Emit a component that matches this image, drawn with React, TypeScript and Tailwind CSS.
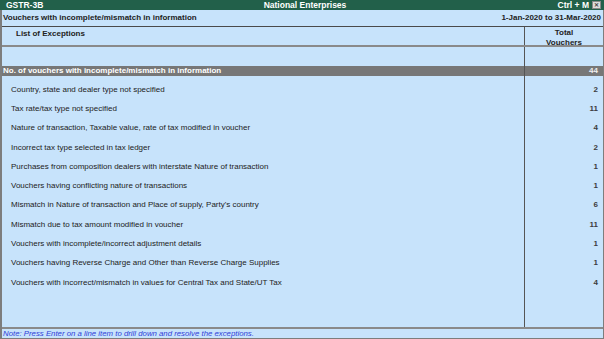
import React from "react";

const ROWS: [string, number][] = [
  ["Country, state and dealer type not specified", 2],
  ["Tax rate/tax type not specified", 11],
  ["Nature of transaction, Taxable value, rate of tax modified in voucher", 4],
  ["Incorrect tax type selected in tax ledger", 2],
  ["Purchases from composition dealers with interstate Nature of transaction", 1],
  ["Vouchers having conflicting nature of transactions", 1],
  ["Mismatch in Nature of transaction and Place of supply, Party's country", 6],
  ["Mismatch due to tax amount modified in voucher", 11],
  ["Vouchers with incomplete/incorrect adjustment details", 1],
  ["Vouchers having Reverse Charge and Other than Reverse Charge Supplies", 1],
  ["Vouchers with incorrect/mismatch in values for Central Tax and State/UT Tax", 4],
];

export default function App() {
  return (
    <div
      className="flex h-[339px] w-[604px] flex-col overflow-hidden bg-[#c7e3fb] text-[#222]"
      style={{ fontFamily: '"Liberation Sans", Arial, sans-serif' }}
    >
      {/* title bar */}
      <div className="flex h-[10px] items-center bg-[#22604a] text-[8.5px] font-bold leading-none text-white">
        <div className="w-[200px] pl-[6px]">GSTR-3B</div>
        <div className="flex-1 pl-[6px] text-center">National Enterprises</div>
        <div className="flex w-[200px] items-center justify-end gap-[3px] pr-[3px]">
          <span>Ctrl + M</span>
          <span className="flex h-[8px] w-[9px] items-center justify-center border border-[#888] bg-[#dcdcdc] text-[6px] text-[#444]">
            ✕
          </span>
        </div>
      </div>

      <div className="flex flex-1 flex-col border-l-2 border-r border-[#7d7d7d]">
        {/* report heading */}
        <div className="flex h-[17px] items-center justify-between border-b border-[#4a4a4a] pl-[1px] pr-[2px] text-[8px] font-bold">
          <span>Vouchers with incomplete/mismatch in information</span>
          <span>1-Jan-2020 to 31-Mar-2020</span>
        </div>

        {/* column headers */}
        <div className="flex h-[20px] border-b-2 border-[#8a8a8a] text-[8px] font-bold leading-[10px]">
          <div className="flex-1 pl-[14px] pt-[2px]">List of Exceptions</div>
          <div className="w-[79px] border-l border-[#555] pt-[1px] text-center">
            Total
            <br />
            Vouchers
          </div>
        </div>

        {/* body */}
        <div className="flex flex-1 border-b-2 border-[#8a8a8a]">
          <div className="flex flex-1 flex-col">
            <div className="h-[19px]" />
            <div className="flex h-[10px] items-center bg-[#777] pl-[1px] text-[8px] font-bold leading-none text-white">
              No. of vouchers with incomplete/mismatch in information
            </div>
            <div className="flex flex-col pt-[4px]">
              {ROWS.map(([label]) => (
                <div key={label} className="flex h-[19.3px] items-center pl-[9px] text-[8px] leading-none">
                  {label}
                </div>
              ))}
            </div>
          </div>
          <div className="flex w-[79px] flex-col border-l border-[#555]">
            <div className="h-[19px]" />
            <div className="flex h-[10px] items-center justify-end bg-[#777] pr-[5px] text-[8px] font-bold leading-none text-[#eee]">
              44
            </div>
            <div className="flex flex-col pt-[4px]">
              {ROWS.map(([label, n]) => (
                <div
                  key={label}
                  className="flex h-[19.3px] items-center justify-end pr-[5px] text-[8px] font-bold leading-none text-[#3c3c3c]"
                >
                  {n}
                </div>
              ))}
            </div>
          </div>
        </div>

        {/* footer note */}
        <div className="flex h-[10px] items-center border-b border-[#7d7d7d] pl-[1px] text-[7.8px] italic leading-none text-[#3040d8]">
          Note: Press Enter on a line item to drill down and resolve the exceptions.
        </div>
      </div>
    </div>
  );
}
